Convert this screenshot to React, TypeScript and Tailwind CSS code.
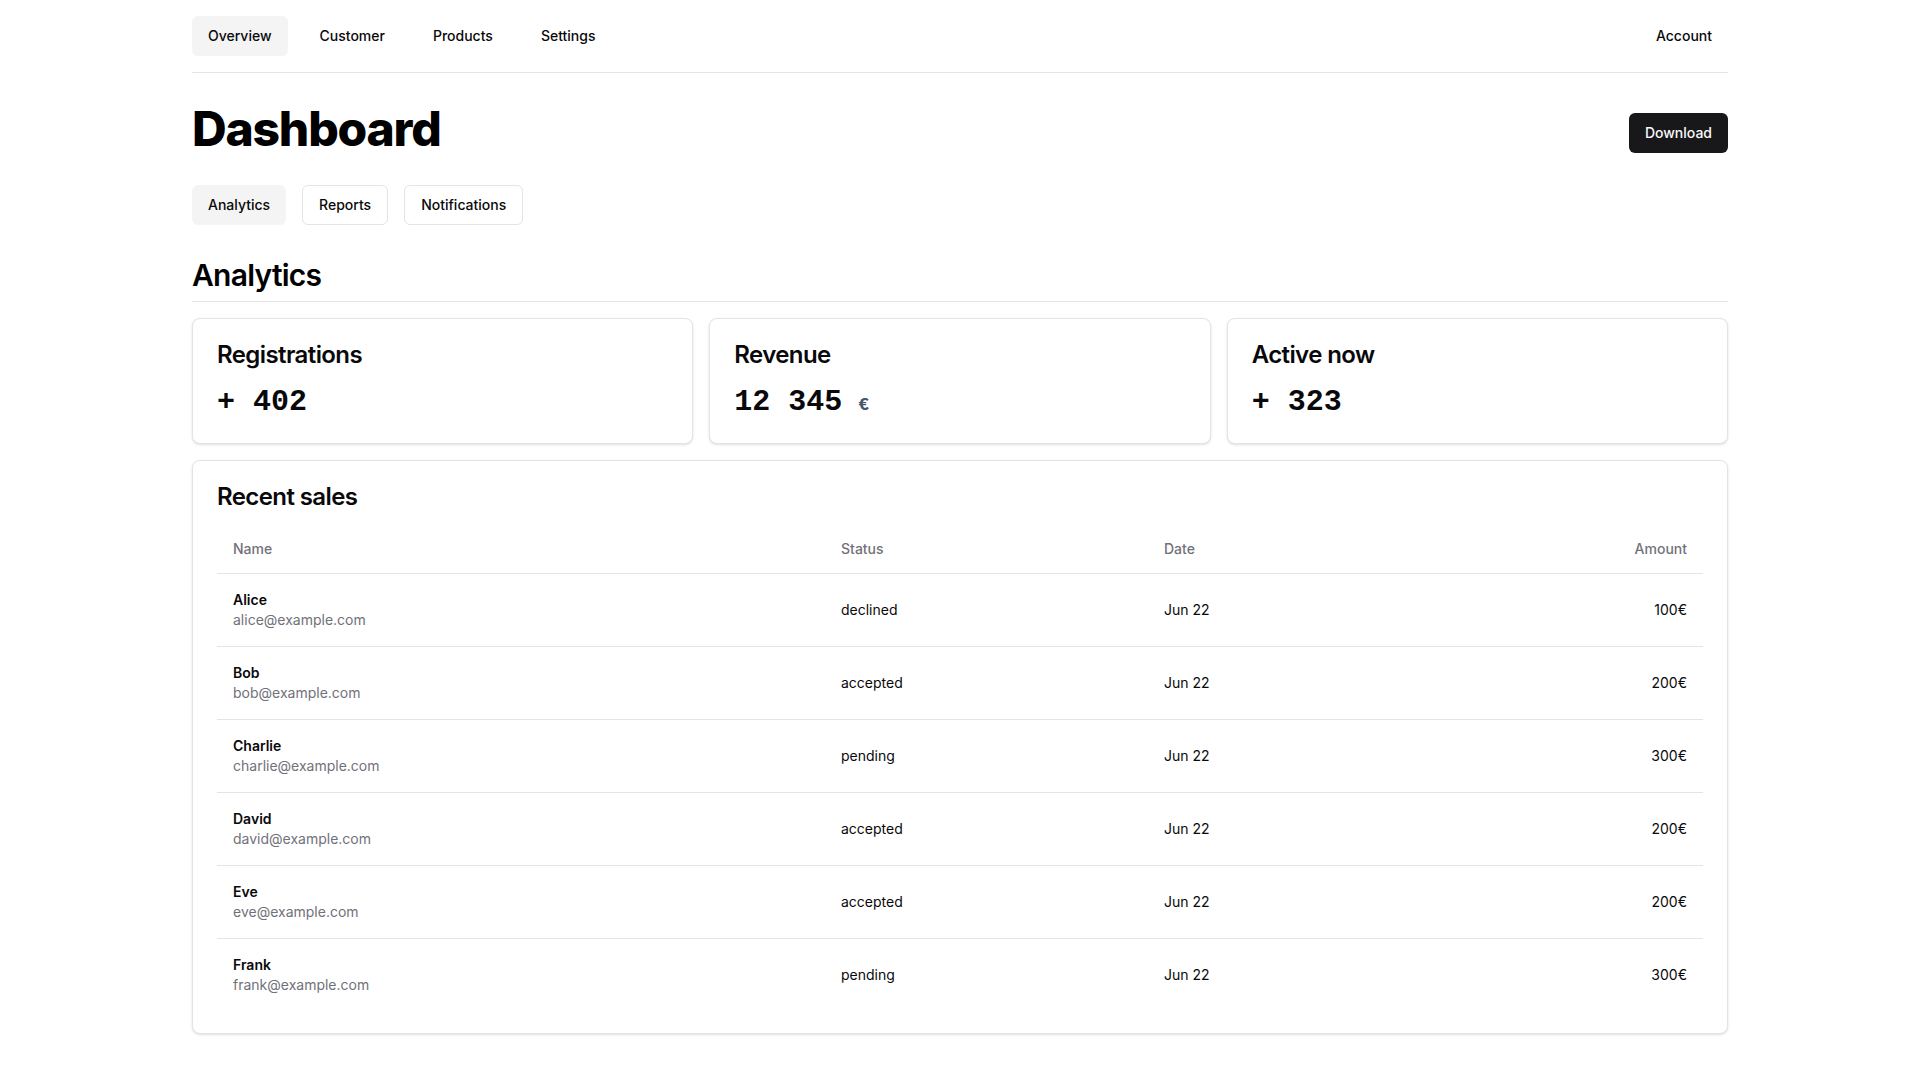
const navItems = ['Overview', 'Customer', 'Products', 'Settings'];
const tabs = ['Analytics', 'Reports', 'Notifications'];

const sales = [
  {name: 'Alice', email: 'alice@example.com', status: 'declined', date: 'Jun 22', amount: '100€'},
  {name: 'Bob', email: 'bob@example.com', status: 'accepted', date: 'Jun 22', amount: '200€'},
  {name: 'Charlie', email: 'charlie@example.com', status: 'pending', date: 'Jun 22', amount: '300€'},
  {name: 'David', email: 'david@example.com', status: 'accepted', date: 'Jun 22', amount: '200€'},
  {name: 'Eve', email: 'eve@example.com', status: 'accepted', date: 'Jun 22', amount: '200€'},
  {name: 'Frank', email: 'frank@example.com', status: 'pending', date: 'Jun 22', amount: '300€'},
];

function StatCard({title, value, unit}: {title: string; value: string; unit?: string}) {
  return (
    <div className="rounded-lg border border-[#e4e4e7] bg-white p-6 shadow-sm">
      <h3 className="text-2xl font-semibold leading-none tracking-tight text-[#09090b]">{title}</h3>
      <p className="mt-5 flex items-baseline font-['Liberation_Mono',monospace] text-3xl font-bold leading-none text-[#09090b]">
        <span className="whitespace-pre">{value}</span>
        {unit && <span className="ml-4 text-lg text-[#475569]">{unit}</span>}
      </p>
    </div>
  );
}

export default function App() {
  return (
    <div className="min-h-screen bg-white font-['Inter',sans-serif] text-[#09090b]">
      <div className="mx-auto w-full max-w-[1536px]">
        <nav className="flex items-center justify-between border-b border-[#e4e4e7] py-4">
          <ul className="flex items-center gap-4">
            {navItems.map((item, i) => (
              <li key={item}>
                <a
                  className={`flex h-10 items-center rounded-md px-4 text-sm font-medium ${i === 0 ? 'bg-[#f4f4f5]' : ''}`}
                >
                  {item}
                </a>
              </li>
            ))}
          </ul>
          <a className="flex h-10 items-center px-4 text-sm font-medium">Account</a>
        </nav>

        <header className="flex items-end justify-between pt-8">
          <h1 className="text-5xl font-extrabold leading-none tracking-tight text-black">Dashboard</h1>
          <button className="h-10 rounded-md bg-[#18181b] px-4 text-sm font-medium text-[#fafafa]">Download</button>
        </header>

        <div className="mt-8 flex gap-4">
          {tabs.map((tab, i) => (
            <button
              key={tab}
              className={`h-10 rounded-md px-4 text-sm font-medium ${i === 0 ? 'bg-[#f4f4f5]' : 'border border-[#e4e4e7] bg-white'}`}
            >
              {tab}
            </button>
          ))}
        </div>

        <h2 className="mt-8 border-b border-[#e4e4e7] pb-2 text-3xl font-semibold tracking-tight text-black">Analytics</h2>

        <div className="mt-4 grid grid-cols-3 gap-4">
          <StatCard title="Registrations" value="+ 402" />
          <StatCard title="Revenue" value="12 345" unit="€" />
          <StatCard title="Active now" value="+ 323" />
        </div>

        <section className="mt-4 rounded-lg border border-[#e4e4e7] bg-white px-6 pb-[22px] pt-6 shadow-sm">
          <h3 className="text-2xl font-semibold leading-none tracking-tight">Recent sales</h3>
          <table className="mt-4 w-full table-fixed text-sm">
            <thead>
              <tr className="border-b border-[#e4e4e7]">
                <th className="h-12 w-[608px] px-4 text-left font-medium text-[#71717a]">Name</th>
                <th className="h-12 w-[323px] px-4 text-left font-medium text-[#71717a]">Status</th>
                <th className="h-12 w-[277px] px-4 text-left font-medium text-[#71717a]">Date</th>
                <th className="h-12 px-4 text-right font-medium text-[#71717a]">Amount</th>
              </tr>
            </thead>
            <tbody>
              {sales.map((row, i) => (
                <tr key={row.name} className={i < sales.length - 1 ? 'border-b border-[#e4e4e7]' : ''}>
                  <td className="p-4">
                    <div className="font-semibold">{row.name}</div>
                    <div className="text-[#71717a]">{row.email}</div>
                  </td>
                  <td className="p-4">{row.status}</td>
                  <td className="p-4">{row.date}</td>
                  <td className="p-4 text-right">{row.amount}</td>
                </tr>
              ))}
            </tbody>
          </table>
        </section>
      </div>
    </div>
  );
}
